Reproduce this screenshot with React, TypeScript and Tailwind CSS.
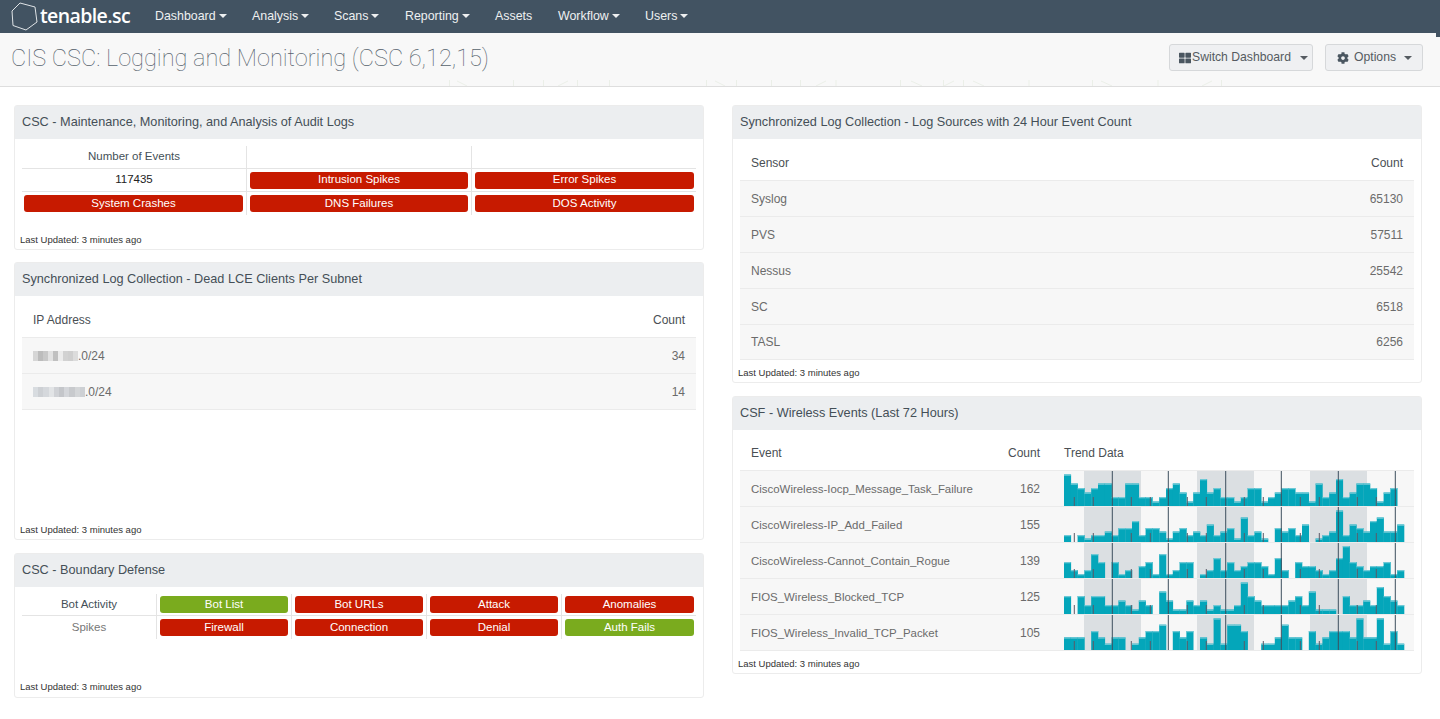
import { FaThLarge, FaCog } from "react-icons/fa";

const BAR = 6.8;
const row1 = [7,5,4,3,4,5,5,2,2,5,5,2,2,1,2,4,5,3,1,3,6,3,4,2,2,1,2,4,4,1,2,3,4,4,3,3,1,5,2,3,6,2,3,5,5,4,1,3,4,0].map((v) => v * 4.5);
const row2 = [7,0,7,3.5,7,7,10.5,7,14,14,21,7,14,14,10.5,3.5,10.5,14,7,10.5,7,17.5,7,10.5,14,3.5,24.5,7,10.5,3.5,0,14,10.5,14,7,17.5,0,3.5,7,10.5,31.5,7,17.5,14,10.5,21,24.5,10.5,10.5,17.5];
const row3 = [16,8,4,8,24,16,0,16,4,8,0,12,16,4,24,4,8,16,16,0,4,8,20,8,16,8,12,16,16,12,4,20,8,0,16,12,12,8,4,8,20,32,16,12,8,12,12,16,4,8];
const row4 = [4,0,4,2,4,4,2,2,3,2,1,3,2,0,5,3,1,1,3,2,3,1,2,1,1,2,7,4,3,2,2,2,2,3,4,2,5,1,1,1,0,4,2,2,3,2,6,4,3,2].map((v) => v * 4.5);
const row5 = [2,2,2,0,3,2,1,2,2,0,1,2,3,3,4,0,3,2,3,0,2,1,5,1,4,4,3,0,0,1,1,2,4,2,2,0,3,1,2,3,3,3,2,5,2,2,5,1,3,1].map((v) => v * 6.33);

const longTicks = [48.3, 104.3, 161.7, 217.3, 274.3, 331.3];
const shortTicks = [10.3, 29.3, 67.3, 86.3, 123.3, 142.3, 180.3, 199.3, 236.3, 255.3, 293.3, 312.3];
const bands = [20, 133, 246];

const faintVert = [449, 513, 543, 577, 609, 706, 736, 771, 800, 835.5, 900, 943, 963, 1028.5, 1092, 1157.5, 1221];
const faintDiag: [number, number, number, number][] = [
  [457, 5, 467, 10], [558, 10, 568, 5], [715, 5, 725, 10], [816, 10, 826, 5], [911, 5, 922, 10],
  [944, 10, 954, 5], [973, 5, 984, 10], [1101, 5, 1112, 10], [1202, 10, 1212, 5],
];

function Spark({ data }: { data: number[] }) {
  return (
    <svg width="352" height="35" viewBox="0 0 352 35" className="block shrink-0">
      {bands.map((x) => (
        <rect key={x} x={x} y={0} width={57} height={35} fill="#dbdfe2" />
      ))}
      {data.map((h, i) =>
        h > 0 ? (
          <g key={i}>
            <rect x={i * BAR} y={35 - h} width={BAR + 0.3} height={h} fill="#04a6ba" />
            <rect x={i * BAR} y={35 - h} width={BAR} height={1.3} fill="#6fc9d6" />
          </g>
        ) : null
      )}
      {shortTicks.map((x) => (
        <rect key={x} x={x - 0.5} y={26} width={1} height={9} fill="#5b5a68" />
      ))}
      {longTicks.map((x) => (
        <rect key={x} x={x - 0.5} y={0} width={1} height={35} fill="#3d4f5e" />
      ))}
    </svg>
  );
}

function Caret() {
  return <span className="ml-[3px] inline-block h-0 w-0 border-x-[4px] border-t-[4px] border-x-transparent border-t-current align-middle" />;
}

function NavItem({ label, w, caret = true }: { label: string; w: string; caret?: boolean }) {
  return (
    <span className={`${w} shrink-0 whitespace-nowrap text-[12.4px] text-[#eef0f1]`}>
      {label}
      {caret && <Caret />}
    </span>
  );
}

function Panel({ title, h, children }: { title: string; h: string; children: React.ReactNode }) {
  return (
    <section className={`${h} flex flex-col rounded-[3px] border border-[#ececec] bg-white`}>
      <h2 className="flex h-[33px] shrink-0 items-center bg-[#eceef0] px-[7px] text-[12.7px] font-normal text-[#444f57]">{title}</h2>
      <div className="flex min-h-0 flex-1 flex-col">{children}</div>
    </section>
  );
}

function Updated({ pb = "pb-[3px]" }: { pb?: string }) {
  return <p className={`mt-auto whitespace-nowrap px-[5px] ${pb} text-[9.5px] leading-[12px] text-[#333]`}>Last Updated: 3 minutes ago</p>;
}

function Alert({ label, color = "bg-[#c71a00]" }: { label: string; color?: string }) {
  return (
    <div className={`flex h-[17px] w-full items-center justify-center rounded-[3px] ${color} text-[11.5px] text-white`}>{label}</div>
  );
}

function Cell({ children, w, pad = "px-[3px]", last }: { children?: React.ReactNode; w: string; pad?: string; last?: boolean }) {
  return (
    <div className={`${w} ${pad} flex shrink-0 items-center justify-center ${last ? "" : "border-r border-[#e4e4e4]"}`}>{children}</div>
  );
}

function Mosaic({ cells, cell = "w-[5px]" }: { cells: string[]; cell?: string }) {
  return (
    <span className="inline-flex h-[10px] blur-[0.6px]">
      {cells.map((c, i) => (
        <span key={i} className={`h-full ${cell}`} style={{ backgroundColor: c }} />
      ))}
    </span>
  );
}

function DataRow({ left, right, h = "h-[36px]" }: { left: React.ReactNode; right: string; h?: string }) {
  return (
    <div className={`flex ${h} items-center justify-between border-b border-[#ebebeb] bg-[#f7f7f7] px-[11px] text-[12px] text-[#6b6b6b]`}>
      <span className="flex items-center">{left}</span>
      <span>{right}</span>
    </div>
  );
}

function TableHead({ left, right }: { left: string; right: string }) {
  return (
    <div className="flex h-[36px] items-center justify-between border-b border-[#ebebeb] px-[11px] text-[12px] text-[#4a4f54]">
      <span>{left}</span>
      <span>{right}</span>
    </div>
  );
}

function EventRow({ name, count, data }: { name: string; count: string; data: number[] }) {
  return (
    <div className="flex h-[36px] items-start border-b border-[#ebebeb] bg-[#f7f7f7] text-[12px] text-[#6b6b6b]">
      <span className="flex h-[35px] w-[265px] shrink-0 items-center pl-[11px] pt-[2px] text-[11.45px]">{name}</span>
      <span className="flex h-[35px] w-[35px] shrink-0 items-center justify-end pt-[1px]">{count}</span>
      <span className="ml-[24px]"><Spark data={data} /></span>
    </div>
  );
}

export default function App() {
  return (
    <div className="h-[719px] overflow-hidden bg-white font-['Liberation_Sans',Arial,sans-serif]">
      <nav className="relative flex h-[33px] items-center bg-[#425362] pb-[1px] pl-[11px]">
        <svg width="27" height="29" viewBox="0 0 27 29" className="mt-[1px] shrink-0">
          <polygon points="9,1 24,5 26,20 15,28 2,23.5 1,9" fill="none" stroke="#dfe3e6" strokeWidth="1" />
        </svg>
        <span className="ml-[2px] w-[115px] shrink-0 font-['Open_Sans',sans-serif] text-[19.5px] font-semibold leading-none tracking-[-0.6px] text-white">tenable.sc</span>
        <NavItem label="Dashboard" w="w-[97px]" />
        <NavItem label="Analysis" w="w-[82px]" />
        <NavItem label="Scans" w="w-[71px]" />
        <NavItem label="Reporting" w="w-[90px]" />
        <NavItem label="Assets" w="w-[63px]" caret={false} />
        <NavItem label="Workflow" w="w-[87px]" />
        <NavItem label="Users" w="w-[60px]" />
        <span className="absolute right-0 top-[33px] z-10 h-[4px] w-[4px] bg-[#425362]" />
      </nav>
      <header className="relative flex h-[54px] items-center justify-between border-b border-[#dedede] bg-[#f8f8f8] pb-[4px] pl-[11px] pr-[17px]">
        <svg width="1440" height="10" viewBox="0 0 1440 10" className="absolute bottom-0 left-0">
          {faintVert.map((x) => (
            <rect key={x} x={x} y={4} width={1} height={6} fill="#ebefe8" />
          ))}
          {faintDiag.map(([a, b, c, d]) => (
            <line key={a} x1={a} y1={b} x2={c} y2={d} stroke="#ebefe8" strokeWidth="1" />
          ))}
        </svg>
        <h1 className="relative pt-[2px] font-['Roboto',sans-serif] text-[23.5px] font-thin text-[#56626c]">CIS CSC: Logging and Monitoring (CSC 6,12,15)</h1>
        <div className="relative flex items-center gap-[12px] whitespace-nowrap text-[12.2px] text-[#555b61]">
          <button className="flex h-[27px] w-[144px] items-center rounded-[3px] border border-[#d6d8da] bg-[#eff0f2] pl-[9px]">
            <FaThLarge className="mr-[1px] shrink-0 text-[12px] text-[#4a5660]" />
            Switch Dashboard
            <span className="ml-[6px]"><Caret /></span>
          </button>
          <button className="flex h-[27px] w-[98px] items-center rounded-[3px] border border-[#d6d8da] bg-[#eff0f2] pl-[11px]">
            <FaCog className="mr-[5px] shrink-0 text-[12px] text-[#4a5660]" />
            Options
            <span className="ml-[5px]"><Caret /></span>
          </button>
        </div>
      </header>
      <main className="flex gap-[28px] px-[14px] pt-[18px]">
        <div className="flex w-[690px] flex-col">
          <Panel title="CSC - Maintenance, Monitoring, and Analysis of Audit Logs" h="h-[145px]">
            <div className="mx-[7px] mt-[7px] flex flex-col text-[11.5px] text-[#333]">
              <div className="flex h-[23px] border-b border-[#e4e4e4]">
                <Cell w="w-[225px]"><span className="text-[#444f57]">Number of Events</span></Cell>
                <Cell w="w-[225px]" />
                <Cell w="w-[224px]" last />
              </div>
              <div className="flex h-[23px] border-b border-[#e4e4e4]">
                <Cell w="w-[225px]"><span className="text-[#222]">117435</span></Cell>
                <Cell w="w-[225px]"><Alert label="Intrusion Spikes" /></Cell>
                <Cell w="w-[224px]" pad="pl-[3px] pr-[2px]" last><Alert label="Error Spikes" /></Cell>
              </div>
              <div className="flex h-[23px]">
                <Cell w="w-[225px]" pad="pl-[2px] pr-[3px]"><Alert label="System Crashes" /></Cell>
                <Cell w="w-[225px]"><Alert label="DNS Failures" /></Cell>
                <Cell w="w-[224px]" pad="pl-[3px] pr-[2px]" last><Alert label="DOS Activity" /></Cell>
              </div>
            </div>
            <Updated />
          </Panel>
          <div className="mt-[12px]">
            <Panel title="Synchronized Log Collection - Dead LCE Clients Per Subnet" h="h-[278px]">
              <div className="mx-[7px] mt-[6px]">
                <TableHead left="IP Address" right="Count" />
                <DataRow left={<><Mosaic cells={["#d6d6d6","#bcbcbc","#c8c8c8","#e2e2e2","#c0c0c0","#ececec","#d2d2d2","#cfcfcf","#dcdcdc"]} />.0/24</>} right="34" />
                <DataRow left={<><Mosaic cell="w-[5.2px]" cells={["#d8dce0","#cdd0d4","#d5d8dc","#e2e4e6","#d0d2d6","#c4c6ca","#d4d6da","#c8cacd","#d4d6d8","#cdd0d4"]} />.0/24</>} right="14" />
              </div>
              <Updated />
            </Panel>
          </div>
          <div className="mt-[13px]">
            <Panel title="CSC - Boundary Defense" h="h-[145px]">
              <div className="mx-[7px] mt-[7px] flex flex-col text-[11.5px]">
                <div className="flex h-[22px] border-b border-[#e4e4e4]">
                  <Cell w="w-[135px]"><span className="text-[#444f57]">Bot Activity</span></Cell>
                  <Cell w="w-[135px]"><Alert label="Bot List" color="bg-[#7aab1e]" /></Cell>
                  <Cell w="w-[135px]"><Alert label="Bot URLs" /></Cell>
                  <Cell w="w-[135px]"><Alert label="Attack" /></Cell>
                  <Cell w="w-[134px]" pad="pl-[3px] pr-[2px]" last><Alert label="Anomalies" /></Cell>
                </div>
                <div className="flex h-[23px]">
                  <Cell w="w-[135px]"><span className="text-[#777]">Spikes</span></Cell>
                  <Cell w="w-[135px]"><Alert label="Firewall" /></Cell>
                  <Cell w="w-[135px]"><Alert label="Connection" /></Cell>
                  <Cell w="w-[135px]"><Alert label="Denial" /></Cell>
                  <Cell w="w-[134px]" pad="pl-[3px] pr-[2px]" last><Alert label="Auth Fails" color="bg-[#7aab1e]" /></Cell>
                </div>
              </div>
              <Updated pb="pb-[4px]" />
            </Panel>
          </div>
        </div>
        <div className="flex w-[690px] flex-col">
          <Panel title="Synchronized Log Collection - Log Sources with 24 Hour Event Count" h="h-[278px]">
            <div className="mx-[7px] mt-[6px]">
              <TableHead left="Sensor" right="Count" />
              <DataRow left="Syslog" right="65130" />
              <DataRow left="PVS" right="57511" />
              <DataRow left="Nessus" right="25542" />
              <DataRow left="SC" right="6518" />
              <DataRow left="TASL" right="6256" h="h-[35px]" />
            </div>
            <Updated />
          </Panel>
          <div className="mt-[13px]">
            <Panel title="CSF - Wireless Events (Last 72 Hours)" h="h-[278px]">
              <div className="mx-[7px] mt-[5px]">
                <div className="flex h-[36px] items-center border-b border-[#ebebeb] text-[12px] text-[#4a4f54]">
                  <span className="w-[265px] shrink-0 pl-[11px]">Event</span>
                  <span className="w-[35px] shrink-0 text-right">Count</span>
                  <span className="ml-[24px]">Trend Data</span>
                </div>
                <EventRow name="CiscoWireless-Iocp_Message_Task_Failure" count="162" data={row1} />
                <EventRow name="CiscoWireless-IP_Add_Failed" count="155" data={row2} />
                <EventRow name="CiscoWireless-Cannot_Contain_Rogue" count="139" data={row3} />
                <EventRow name="FIOS_Wireless_Blocked_TCP" count="125" data={row4} />
                <EventRow name="FIOS_Wireless_Invalid_TCP_Packet" count="105" data={row5} />
              </div>
              <Updated />
            </Panel>
          </div>
        </div>
      </main>
    </div>
  );
}
